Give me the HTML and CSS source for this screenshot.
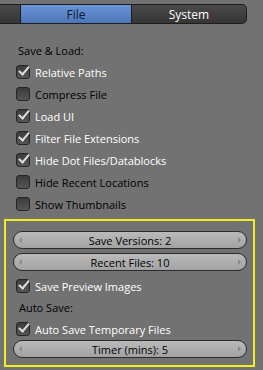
FILE: index.html
```html
<!DOCTYPE html>
<html>
<head>
<meta charset="utf-8">
<link rel="stylesheet" href="styles.css">
</head>
<body>
<div class="tabs">
  <div class="tab stub"></div>
  <div class="tab active">File</div>
  <div class="tab last">System</div>
</div>
<div class="panel">
  <div class="label">Save &amp; Load:</div>
  <div class="row on"><span class="cb"></span>Relative Paths</div>
  <div class="row"><span class="cb"></span>Compress File</div>
  <div class="row on"><span class="cb"></span>Load UI</div>
  <div class="row on"><span class="cb"></span>Filter File Extensions</div>
  <div class="row on"><span class="cb"></span>Hide Dot Files/Datablocks</div>
  <div class="row"><span class="cb"></span>Hide Recent Locations</div>
  <div class="row"><span class="cb"></span>Show Thumbnails</div>
</div>
<div class="highlight">
  <div class="num"><span class="arr l"></span><span class="txt">Save Versions: 2</span><span class="arr r"></span></div>
  <div class="num"><span class="arr l"></span><span class="txt">Recent Files: 10</span><span class="arr r"></span></div>
  <div class="row on in"><span class="cb"></span>Save Preview Images</div>
  <div class="label in">Auto Save:</div>
  <div class="row on in"><span class="cb"></span>Auto Save Temporary Files</div>
  <div class="num"><span class="arr l"></span><span class="txt">Timer (mins): 5</span><span class="arr r"></span></div>
</div>
</body>
</html>
```
FILE: styles.css
```css
html, body { margin: 0; padding: 0; }
body {
  width: 263px; height: 370px; overflow: hidden;
  background: #727272;
  font-family: "Open Sans", "DejaVu Sans", sans-serif;
  font-size: 11px;
  color: #000;
}
.tabs {
  display: flex;
  margin-top: 4px;
  height: 20px;
}
.tab {
  box-sizing: border-box;
  height: 20px;
  border: 1px solid #1e1e1e;
  background: linear-gradient(#4a4a4a, #353535);
  color: #fff;
  display: flex; align-items: center; justify-content: center;
  font-size: 12px;
}
.tab.stub { width: 20px; border-left: none; border-right: none; }
.tab.active {
  width: 112px;
  background: linear-gradient(#6b95d8, #4c76b8);
  color: #0c1a33;
}
.tab.last {
  width: 115px; border-left: none;
  border-radius: 0 5px 5px 0;
}
.panel {
  padding: 19px 0 0 16px;
  display: flex; flex-direction: column;
}
.label { height: 16px; line-height: 16px; padding-left: 2px; margin-bottom: 2px; }
.row {
  height: 22px;
  display: flex; align-items: center;
  color: #000;
}
.row.on { color: #fff; }
.cb {
  box-sizing: border-box;
  width: 14px; height: 14px;
  border: 1px solid #262626;
  border-radius: 3px;
  background: linear-gradient(#3c3c3c, #555);
  margin-right: 5px;
  position: relative;
}
.row.on .cb::after {
  content: "";
  position: absolute;
  left: 4px; top: -2px;
  width: 4px; height: 9px;
  border: solid #dcdcdc;
  border-width: 0 2px 2px 0;
  transform: rotate(40deg);
}
.highlight {
  box-sizing: border-box;
  margin: 4px 0 0 4px;
  width: 251px; height: 148px;
  border: 2px solid #eeee22;
  padding: 10px 0 0 7px;
  display: flex; flex-direction: column;
}
.num {
  box-sizing: border-box;
  width: 234px; height: 18px;
  border: 1px solid #2c2c2c;
  border-radius: 9px;
  background: linear-gradient(#bababa, #a2a2a2);
  display: flex; align-items: center;
  margin-bottom: 4px;
  font-size: 11px;
}
.num .txt { flex: 1; text-align: center; }
.arr { width: 0; height: 0; border: 3px solid transparent; }
.arr.l { border-right: 3px solid #8a8a8a; margin-left: 5px; border-left-width: 0; }
.arr.r { border-left: 3px solid #8a8a8a; margin-right: 5px; border-right-width: 0; }
.row.in { padding-left: 3px; }
.label.in { padding-left: 6px; margin: 3px 0 2px; }
```
